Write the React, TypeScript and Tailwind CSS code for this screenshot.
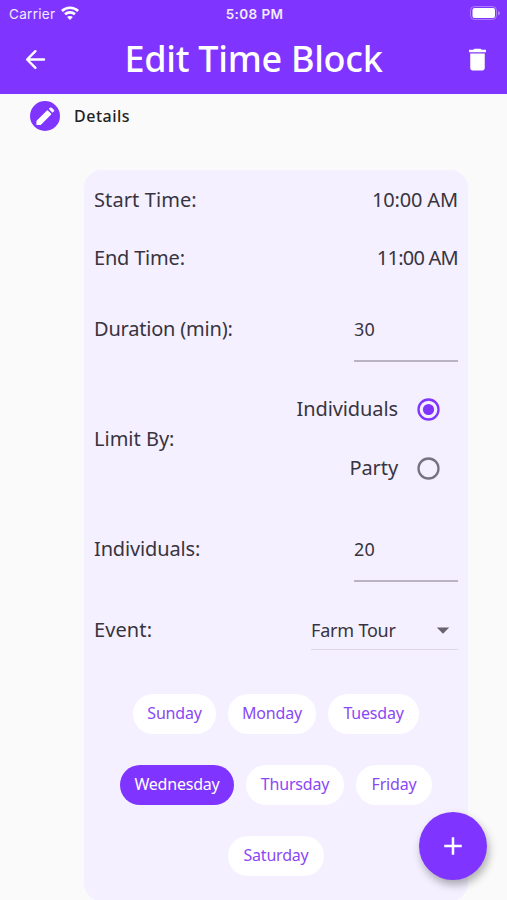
import { useState } from "react";
import { MdAdd, MdArrowDropDown, MdDelete } from "react-icons/md";
import clsx from "clsx";

const weekRows = [
  [
    { name: "Sunday", width: "w-[83px]" },
    { name: "Monday", width: "w-[88px]" },
    { name: "Tuesday", width: "w-[91px]" },
  ],
  [
    { name: "Wednesday", width: "w-[114px]" },
    { name: "Thursday", width: "w-[98px]" },
    { name: "Friday", width: "w-[76px]" },
  ],
  [{ name: "Saturday", width: "w-[96px]" }],
];

function ArrowBackIcon() {
  return (
    <svg className="size-[29px]" viewBox="0 0 29 29" fill="none" stroke="currentColor" strokeWidth="2.4" strokeLinecap="round" strokeLinejoin="round">
      <path d="M23 14.5H6.4M14.4 6.2 6.1 14.5l8.3 8.3" />
    </svg>
  );
}

function PencilIcon() {
  return (
    <svg className="size-[30px]" viewBox="0 0 30 30" fill="currentColor" stroke="currentColor" strokeLinejoin="round">
      <path d="M7 20.2 17.4 9.8l3.3 3.3L10.3 23.5H7Z" strokeWidth="1.2" />
      <path d="m19.3 8 1-1q.6-.5 1.2 0l2 2q.6.6 0 1.2l-1 1Z" strokeWidth="1" />
    </svg>
  );
}

function StatusBar() {
  return (
    <div className="grid h-7 grid-cols-3 items-center pl-[9px] pr-[7px] font-[Inter,sans-serif] text-[13px] text-white/90">
      <div className="flex items-center gap-1.5">
        <span className="text-[13.5px] tracking-[0.3px]">Carrier</span>
        <svg className="-mt-0.5 h-[14px] w-[18px]" viewBox="0 0 18 14" fill="none" stroke="white" strokeWidth="2.6">
          <path d="M.9 5C5.4.6 12.6.6 17.1 5" />
          <path d="M4 8.3c2.8-2.6 7.2-2.6 10 0" />
          <path d="M9 14 6.1 11.1c1.6-1.5 4.2-1.5 5.8 0Z" fill="white" stroke="none" />
        </svg>
      </div>
      <span className="pt-px text-center text-[13.5px] font-semibold tracking-[0.4px]">5:08 PM</span>
      <svg className="-mt-0.5 h-[14px] w-[30px] justify-self-end" viewBox="0 0 30 14">
        <rect x=".5" y=".5" width="26" height="13" rx="4" fill="none" stroke="white" strokeOpacity=".35" />
        <rect x="2.5" y="2" width="22.5" height="10" rx="2" fill="white" />
        <path d="M28 5v4.4q2-.7 2-2.2t-2-2.2Z" fill="white" fillOpacity=".4" />
      </svg>
    </div>
  );
}

function Header() {
  return (
    <header className="h-[94px] bg-[#7f35ff] text-white">
      <StatusBar />
      <div className="flex h-[63px] items-center justify-between pl-[21px] pr-[15px]">
        <button aria-label="Back">
          <ArrowBackIcon />
        </button>
        <h1 className="-mt-0.5 whitespace-nowrap pr-1.5 text-[36px] leading-none font-medium tracking-[-0.28px]">Edit Time Block</h1>
        <button aria-label="Delete">
          <MdDelete className="size-[29px]" />
        </button>
      </div>
    </header>
  );
}

interface RadioProps {
  label: string;
  checked: boolean;
  onSelect: () => void;
}

function Radio({ label, checked, onSelect }: RadioProps) {
  return (
    <button role="radio" aria-checked={checked} onClick={onSelect} className="flex h-[59px] items-center justify-end gap-[19px] pr-[18px]">
      <span className="tracking-[-0.1px]">{label}</span>
      <svg
        className={clsx("mt-px size-[23px]", checked ? "text-[#7f35ff]" : "text-[#77727f]")}
        viewBox="0 0 23 23"
      >
        <circle cx="11.5" cy="11.5" r="10" fill="none" stroke="currentColor" strokeWidth="2.3" />
        {checked && <circle cx="11.5" cy="11.5" r="5.6" fill="currentColor" />}
      </svg>
    </button>
  );
}

function NumberField({ value }: { value: string }) {
  return (
    <div className="flex h-[65px] w-[104px] items-center border-b-2 border-[#b9b3c3] pt-px text-[18px] tracking-[0.3px]">{value}</div>
  );
}

export default function App() {
  const [limitBy, setLimitBy] = useState("Individuals");
  const [selectedDay, setSelectedDay] = useState("Wednesday");

  return (
    <div className="relative h-[900px] w-[507px] overflow-hidden bg-[#fafafa] font-['Noto_Sans',sans-serif] text-[#38343f]">
      <Header />
      <div className="flex h-[76px] items-start gap-[14px] pl-[30px] pt-[7px]">
        <span className="flex size-[30px] items-center justify-center rounded-full bg-[#7f35ff] text-white">
          <PencilIcon />
        </span>
        <span className="text-[16px] leading-[30px] font-medium tracking-[0.5px] text-[#222]">Details</span>
      </div>

      <main className="ml-[84px] h-[731px] w-[384px] rounded-[18px] bg-[#f4f0ff] pl-2.5 pr-2.5 text-[20px] leading-none">
        <div className="flex h-[59px] items-center justify-between">
          <span className="tracking-[0.1px]">Start Time:</span>
          <span className="tracking-[-0.15px]">10:00 AM</span>
        </div>
        <div className="flex h-[58px] items-center justify-between">
          <span className="tracking-[-0.2px]">End Time:</span>
          <span className="tracking-[-0.75px]">11:00 AM</span>
        </div>
        <div className="flex h-[84px] items-center justify-between">
          <span className="tracking-[-0.2px]">Duration (min):</span>
          <NumberField value="30" />
        </div>
        <div className="flex h-[135px] items-center justify-between">
          <span>Limit By:</span>
          <div role="radiogroup" className="flex flex-col">
            <Radio label="Individuals" checked={limitBy === "Individuals"} onSelect={() => setLimitBy("Individuals")} />
            <Radio label="Party" checked={limitBy === "Party"} onSelect={() => setLimitBy("Party")} />
          </div>
        </div>
        <div className="flex h-[86px] items-center justify-between">
          <span className="tracking-[-0.15px]">Individuals:</span>
          <NumberField value="20" />
        </div>
        <div className="flex h-[75px] items-center justify-between">
          <span className="tracking-[0.1px]">Event:</span>
          <div className="flex h-10 w-[147px] items-center justify-between border-b border-[#ddd7e8] text-[18px]">
            <span className="pt-px tracking-[-0.2px]">Farm Tour</span>
            <MdArrowDropDown className="mt-px size-[30px] text-[#68636f]" />
          </div>
        </div>

        <div className="flex flex-col gap-[31px] pt-[27px]">
          {weekRows.map((days, index) => (
            <div key={index} className="flex justify-center gap-3">
              {days.map((day) => (
                <button
                  key={day.name}
                  onClick={() => setSelectedDay(day.name)}
                  className={clsx(
                    "h-10 rounded-full pb-0.5 text-[16px] tracking-[-0.2px]",
                    day.width,
                    selectedDay === day.name ? "bg-[#7f35ff] text-white" : "bg-white text-[#8a48f5]"
                  )}
                >
                  {day.name}
                </button>
              ))}
            </div>
          ))}
        </div>
      </main>

      <button
        aria-label="Add"
        className="absolute left-[419px] top-[812px] flex size-[68px] items-center justify-center rounded-full bg-[#7f35ff] text-white shadow-[2px_5px_8px_rgba(0,0,0,0.3)]"
      >
        <MdAdd className="size-[30px]" />
      </button>
    </div>
  );
}
